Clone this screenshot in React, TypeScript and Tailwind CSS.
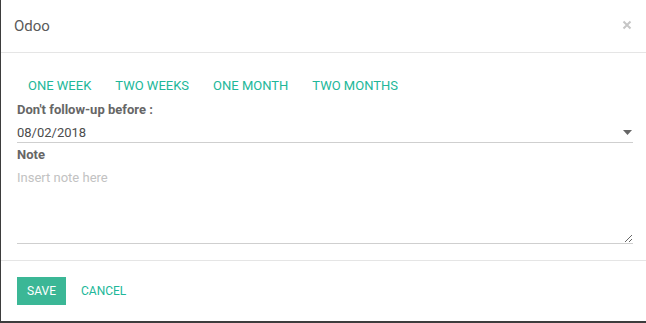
import React from "react";

export default function App() {
  const teal = "text-[#21b799]";
  return (
    <div
      className="w-[646px] h-[323px] bg-[#3d3d3d] pl-[1px] pb-[2px] flex overflow-hidden"
      style={{ fontFamily: "Roboto, 'Noto Sans', sans-serif" }}
    >
      <div className="flex-1 bg-white flex flex-col">
        {/* Header */}
        <div className="h-[53px] border-b border-[#e5e5e5] flex items-center justify-between pl-[13px] pr-[14px]">
          <div className="text-[15px] text-[#5a5a5a] leading-none pt-[1px]">Odoo</div>
          <svg width="10" height="10" viewBox="0 0 10 10" className="mt-[-2px]">
            <path d="M1.5 1.5 L8.5 8.5 M8.5 1.5 L1.5 8.5" stroke="#c6c6c6" strokeWidth="2" />
          </svg>
        </div>
        {/* Body */}
        <div className="flex-1 pl-[16px] pr-[13px] flex flex-col">
          <div className="flex mt-[17px] ml-[-1px] h-[30px] items-center">
            {["ONE WEEK", "TWO WEEKS", "ONE MONTH", "TWO MONTHS"].map((t) => (
              <span key={t} className={`px-[12px] text-[13px] ${teal} leading-none`}>
                {t}
              </span>
            ))}
          </div>
          <div className="h-[18px] flex items-center text-[13px] font-bold text-[#666] leading-none">
            Don't follow-up before :
          </div>
          <div className="mt-[4px] h-[21px] border-b border-[#cfcfcf] flex items-center justify-between text-[13px] text-[#4c4c4c]">
            <span className="leading-none">08/02/2018</span>
            <svg width="9" height="5" viewBox="0 0 9 5" className="mr-[1px]">
              <path d="M0 0 H9 L4.5 5 Z" fill="#666" />
            </svg>
          </div>
          <div className="mt-[2px] h-[18px] flex items-center text-[13px] font-bold text-[#666] leading-none">
            Note
          </div>
          <textarea
            placeholder="Insert note here"
            className="mt-[3px] h-[78px] w-full border-0 border-b border-[#cfcfcf] outline-none text-[13px] leading-[18px] pt-[3px] text-[#4c4c4c] placeholder:text-[#c2c2c2] resize-y"
            style={{ fontFamily: "Roboto, sans-serif" }}
          />
        </div>
        {/* Footer */}
        <div className="h-[61px] border-t border-[#e5e5e5] flex items-center pl-[16px]">
          <button className="h-[28px] w-[49px] bg-[#3bb796] text-white text-[12px] flex items-center justify-center">
            SAVE
          </button>
          <button className={`ml-[15px] text-[12px] ${teal}`}>CANCEL</button>
        </div>
      </div>
    </div>
  );
}
